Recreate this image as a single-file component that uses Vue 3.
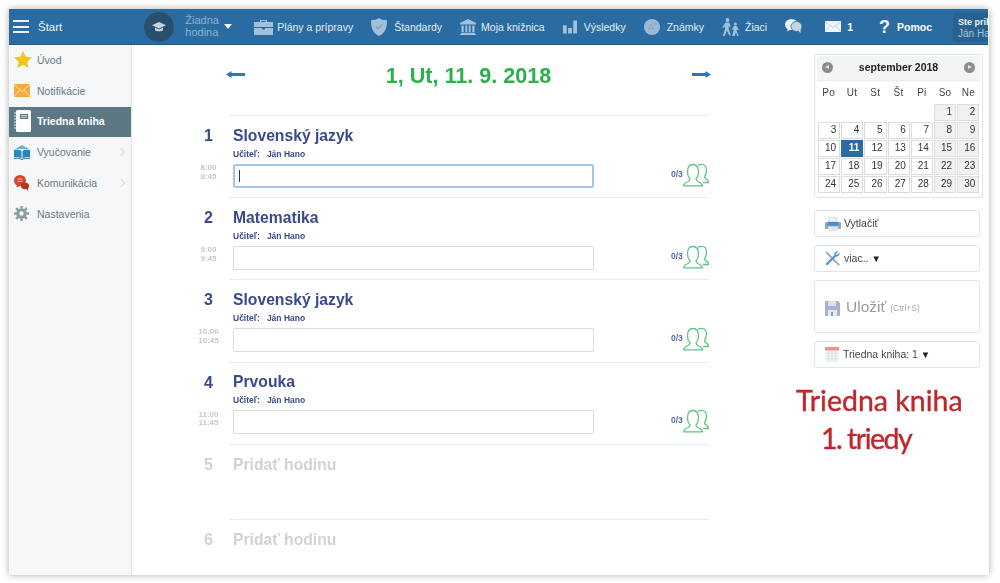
<script setup>
const weekdays = ['Po', 'Ut', 'St', 'Št', 'Pi', 'So', 'Ne']
const blanks = [1, 2, 3, 4, 5]
const days = Array.from({ length: 30 }, (_, i) => i + 1)
const lessons = [
  { n: 1, name: 'Slovenský jazyk', from: '8:00', to: '8:45', focus: true },
  { n: 2, name: 'Matematika', from: '9:00', to: '9:45' },
  { n: 3, name: 'Slovenský jazyk', from: '10:00', to: '10:45' },
  { n: 4, name: 'Prvouka', from: '11:00', to: '11:45' },
]
</script>

<template>
  <div class="page">
    <div class="frame">
      <header class="top">
        <div class="burger"><i></i><i></i><i></i></div>
        <span class="start">Štart</span>
        <div class="cap">
          <svg width="14" height="12" viewBox="0 0 14 12"><path d="M7 1 14 4.200 7 7.400 0 4.200z" fill="#c5d4e0"/><path d="M3 6.600v2.600c1.200 1.300 6.800 1.300 8 0V6.600L7 8.500z" fill="#c5d4e0"/></svg>
        </div>
        <div class="lesson-pick">Žiadna<br>hodina</div>
        <span class="caret"></span>
        <nav class="nav">
          <a class="item g4">
            <svg width="19" height="16" viewBox="0 0 19 16"><path d="M6 3V1h7v2h5.500a.5.500 0 0 1 .5.500V8H0V3.500A.5.500 0 0 1 .5 3zm1.300 0h4.400V2H7.300z" fill="#a4c0d8"/><path d="M0 9h8v1.500h3V9h8v6.500a.5.500 0 0 1-.5.500H.5a.5.500 0 0 1-.5-.5z" fill="#a4c0d8"/></svg>
            Plány a prípravy
          </a>
          <a class="item g7">
            <svg width="16" height="18" viewBox="0 0 16 18"><path d="M8 0c2 1.500 5 2.200 8 2.200 0 7-1.500 12.500-8 15.800C1.500 14.700 0 9.200 0 2.200 3 2.200 6 1.500 8 0z" fill="#a4c0d8"/><path d="m4.800 8.500 2.300 2.400 4.200-4.600" fill="none" stroke="#7ea4c4" stroke-width="1.200"/></svg>
            Štandardy
          </a>
          <a class="item">
            <svg width="16" height="16" viewBox="0 0 16 16"><path d="M8 0 16 4v1.500H0V4z" fill="#a4c0d8"/><path d="M1.500 6.500h2.200v6.500H1.500zM5.300 6.500h2v6.500h-2zM8.700 6.500h2v6.500h-2zM12.300 6.500h2.200v6.500h-2.200zM1 13.800h14V15H1zM0 15h16v1H0z" fill="#a4c0d8"/></svg>
            Moja knižnica
          </a>
          <a class="item g7">
            <svg width="14" height="14" viewBox="0 0 15 14"><path d="M0 5h4v9H0zM5.500 8h4v6h-4zM11 0h4v14h-4z" fill="#a4c0d8"/></svg>
            Výsledky
          </a>
          <a class="item g7">
            <svg width="16" height="16" viewBox="0 0 16 16"><circle cx="8" cy="8" r="8" fill="#9bb9d3"/><path d="m4.500 11.500 2-6h1l2 6M5.300 9.500h3.400M10.500 5h2.500M11.700 3.800v2.400" fill="none" stroke="#7ea4c4" stroke-width=".9"/></svg>
            Známky
          </a>
          <a class="item g6">
            <svg width="17" height="18" viewBox="0 0 17 18"><circle cx="5.500" cy="2" r="1.900" fill="#a4c0d8"/><circle cx="13.300" cy="6" r="1.500" fill="#a4c0d8"/><path d="M3.500 4.500h3.800l1.400 4.200-1.400.6-.6-1.600v3.300l2.300 6.500H7.300L5 12.700 2.500 18H.8l2.200-7V8.200L1.500 10 .3 9.200z" fill="#a4c0d8"/><path d="M11.900 8h2.700l2.200 3.700-1 .6-1-1.300v2.500l1.900 4.500h-1.400l-1.400-3.500-1.400 3.500H10l1.500-5v-2.200l-1 1.100-.8-.7z" fill="#a4c0d8"/></svg>
            Žiaci
          </a>
          <a class="item">
            <svg width="17" height="15" viewBox="0 0 17 15"><ellipse cx="6.500" cy="5.500" rx="6.500" ry="5.500" fill="#eaf1f7"/><path d="m3 9-1 3.500L6.500 10z" fill="#eaf1f7"/><ellipse cx="11.500" cy="7.500" rx="5.500" ry="5" fill="#c2d6e6" stroke="#2a6ca2" stroke-width=".8"/><path d="m13 11 2.500 3.500.2-4.500z" fill="#c2d6e6"/></svg>
          </a>
          <a class="item mail">
            <svg width="16" height="11" viewBox="0 0 16 11"><path d="M0 0h16v11H0z" fill="#eef4f9"/><path d="m0 .5 8 6 8-6M0 10.500l5.500-6M16 10.500l-5.500-6" fill="none" stroke="#b9cfe1" stroke-width=".8"/></svg>
            <b>1</b>
          </a>
          <a class="item help"><span class="q">?</span><b>Pomoc</b></a>
          <div class="user"><b>Ste prihlásený</b><span>Ján Hano</span></div>
        </nav>
      </header>

      <div class="body">
        <aside class="side">
          <a class="s-item">
            <svg width="18" height="17" viewBox="0 0 18 17"><path d="m9 0 2.700 5.800 6.300.7-4.700 4.300 1.300 6.200L9 13.800 3.400 17l1.300-6.200L0 6.500l6.300-.7z" fill="#f5c516"/></svg>
            Úvod
          </a>
          <a class="s-item">
            <svg width="16" height="13" viewBox="0 0 16 13"><path d="M0 0h16v13H0z" fill="#f6aa3c"/><path d="m0 .5 8 7 8-7M0 12.500l6-6.500M16 12.500 10 6" fill="none" stroke="#fde6c4" stroke-width=".9"/></svg>
            Notifikácie
          </a>
          <a class="s-item active">
            <svg width="17" height="22" viewBox="0 0 17 22"><rect x="2" y="0" width="15" height="22" rx="1.500" fill="#fff"/><rect x="6" y="4" width="8" height="5" fill="#5c7884"/><path d="M7 5.500h6M7 7.300h6" stroke="#fff" stroke-width=".7"/><path d="M0 3h3M0 6h3M0 9h3M0 12h3M0 15h3M0 18h3" stroke="#e8eef0" stroke-width="1"/></svg>
            Triedna kniha
          </a>
          <a class="s-item">
            <svg width="16" height="15" viewBox="0 0 16 15"><path d="M8 0 15 4H1z" fill="#6fb2d8"/><path d="M0 5c3-.6 6-.3 7.500 1v7.500C6 12.500 3 12 0 12.500z" fill="#2b86bd"/><path d="M16 5c-3-.6-6-.3-7.500 1v7.500c1.500-1 4.500-1.500 7.500-1z" fill="#2b86bd"/><path d="M0 13.500c3-.5 6 0 8 1 2-1 5-1.500 8-1" fill="none" stroke="#1c6c9d" stroke-width=".9"/></svg>
            Vyučovanie
            <span class="chev"></span>
          </a>
          <a class="s-item">
            <svg width="15" height="16" viewBox="0 0 15 16"><ellipse cx="6" cy="5.500" rx="6" ry="5.500" fill="#d8412c"/><path d="M3 9 2.500 12.500 7 10.500z" fill="#d8412c"/><ellipse cx="11" cy="11" rx="4" ry="3.300" fill="#b83423"/><path d="m12 13.500 2 2.500v-3.500z" fill="#b83423"/><path d="M3.500 4h5M3.500 6.300h5" stroke="#f4c9c1" stroke-width="1"/></svg>
            Komunikácia
            <span class="chev"></span>
          </a>
          <a class="s-item">
            <svg width="15" height="15" viewBox="0 0 15 15"><circle cx="7.500" cy="7.500" r="5.300" fill="#8c9ba2"/><path d="M7.500 0v15M0 7.500h15M2.200 2.200l10.600 10.600M12.800 2.200 2.200 12.800" stroke="#8c9ba2" stroke-width="2.400" stroke-dasharray="2.600 9.800"/><circle cx="7.500" cy="7.500" r="2.200" fill="#f5f7f9"/></svg>
            Nastavenia
          </a>
        </aside>

        <main class="main">
          <section class="center">
            <div class="date-row">
              <svg class="arr" width="19" height="7" viewBox="0 0 19 7"><path d="M0 3.500 5.500 0v2H19v3H5.500v2z" fill="#2f78b4"/></svg>
              <h1>1, Ut, 11. 9. 2018</h1>
              <svg class="arr" width="19" height="7" viewBox="0 0 19 7"><path d="M19 3.500 13.500 0v2H0v3h13.500v2z" fill="#2f78b4"/></svg>
            </div>

            <div v-for="l in lessons" :key="l.n" class="row">
              <div class="left">
                <b class="num">{{ l.n }}</b>
                <span class="time">{{ l.from }}<br>{{ l.to }}</span>
              </div>
              <div class="cell">
                <h2>{{ l.name }}</h2>
                <div class="teacher">Učiteľ:<span>Ján Hano</span></div>
                <div class="entry">
                  <div class="box" :class="{ focus: l.focus }"><i v-if="l.focus" class="cursor"></i></div>
                  <span class="count">0/3</span>
                  <svg class="people" width="26" height="24" viewBox="0 0 26 24">
                    <path d="M15 2.300C16 1.500 17.500 1.300 18.500 1.300c3.500 0 5 2.500 5 6 0 3-1 5-2 6.500 0 1 .5 1.500 1.500 2 1.500.7 2.500 1.500 2.500 3.700h-5.500" fill="none" stroke="#5cc585" stroke-width="1.300"/>
                    <path d="M.8 22.800c0-2 1.700-3.300 4.200-4.300 1.500-.7 2-1.500 2-2.500-1.500-1.500-2.500-4-2.500-7C4.500 4 6 1.500 10 1.500S15.500 4 15.500 9c0 3-1 5.500-2.500 7 0 1 .5 1.800 2 2.500 2.500 1 4 2.300 4.500 4.300z" fill="#fff" stroke="#5cc585" stroke-width="1.300"/>
                  </svg>
                </div>
              </div>
            </div>

            <div class="row empty">
              <div class="left"><b class="num">5</b></div>
              <div class="cell"><h2>Pridať hodinu</h2></div>
            </div>
            <div class="row empty">
              <div class="left"><b class="num">6</b></div>
              <div class="cell"><h2>Pridať hodinu</h2></div>
            </div>
          </section>

          <section class="right">
            <div class="cal">
              <div class="cal-head">
                <span class="round prev"></span>
                <b>september 2018</b>
                <span class="round next"></span>
              </div>
              <div class="weekdays"><span v-for="w in weekdays" :key="w">{{ w }}</span></div>
              <div class="grid">
                <span v-for="b in blanks" :key="'b' + b" class="blank"></span>
                <span
                  v-for="d in days"
                  :key="d"
                  class="day"
                  :class="{ we: d % 7 === 1 || d % 7 === 2, today: d === 11 }"
                >{{ d }}</span>
              </div>
            </div>

            <div class="btn">
              <svg width="16" height="14" viewBox="0 0 16 14"><path d="M4.500 0h6.500l1 5H3.500z" fill="#eef4f9" stroke="#b3c1cb" stroke-width=".6"/><path d="M1 5h14a1 1 0 0 1 1 1v5a1 1 0 0 1-1 1H1a1 1 0 0 1-1-1V6a1 1 0 0 1 1-1z" fill="#9aa8b3"/><path d="M3 5h10l1 3.500H2z" fill="#3e90d8"/><path d="M3 9.500h10V14H3z" fill="#e4e8ec"/></svg>
              <span>Vytlačiť</span>
            </div>
            <div class="btn">
              <svg width="15" height="15" viewBox="0 0 15 15"><path d="m1.500 1.500 12 12" stroke="#a7b3bb" stroke-width="2.200" stroke-linecap="round"/><path d="m2 13 8.500-8.500" stroke="#4f97cf" stroke-width="2.400" stroke-linecap="round"/><path d="M14.500 1.500 12 4l-1.500-1L13 .5c-2-.8-4 .8-3.500 3L11 5.500c2 .6 4-1.500 3.500-4z" fill="#4f97cf"/></svg>
              <span>viac.. <small class="tri">▼</small></span>
            </div>
            <div class="btn save">
              <svg width="15" height="15" viewBox="0 0 15 15"><path d="M0 0h13l2 2v13H0z" fill="#a9b0d0"/><path d="M3 0h8v5H3z" fill="#dfe2ee"/><path d="M3 9h9v6H3z" fill="#e6e8f0"/><path d="M6 11h2v4H6z" fill="#8f97bd"/></svg>
              <span class="save-t">Uložiť</span><small>(Ctrl+S)</small>
            </div>
            <div class="btn">
              <svg width="14" height="15" viewBox="0 0 14 15"><path d="M0 0h14v15H0z" fill="#f3f5f7"/><path d="M0 0h14v3.500H0z" fill="#ef8f8f"/><path d="M1 6h12M1 9h12M1 12h12M3.500 4v10M7 4v10M10.500 4v10" stroke="#d4dae0" stroke-width=".6"/></svg>
              <span>Triedna kniha: 1 <small class="tri">▼</small></span>
            </div>
          </section>
        </main>
      </div>

      <div class="note">
        <span>Triedna kniha</span>
        <span class="note2">1. triedy</span>
      </div>
    </div>
  </div>
</template>

<style>
html, body { margin: 0; background: #fff; }
</style>

<style scoped>
.page {
  width: 1000px;
  height: 583px;
  padding: 9px 0 0 9px;
  box-sizing: border-box;
  overflow: hidden;
  font-family: "Liberation Sans", Arial, sans-serif;
  background: #fff;
}
.frame {
  position: relative;
  width: 980px;
  height: 565.500px;
  display: flex;
  flex-direction: column;
  background: #fff;
  box-shadow: 0 0 7px rgba(0, 0, 0, .32);
  filter: blur(.35px);
}

/* top bar */
.top {
  height: 36px;
  flex: none;
  margin-right: 1px;
  display: flex;
  align-items: center;
  background: #2a6ca2;
  border-bottom: 1px solid #235b88;
  box-sizing: border-box;
  color: #e3ecf4;
  font-size: 10.500px;
  padding-left: 4px;
  overflow: hidden;
}
.burger { width: 16px; flex: none; display: flex; flex-direction: column; gap: 3.500px; }
.burger i { height: 2px; background: #eef4f9; display: block; }
.start { margin-left: 9px; font-size: 11.500px; color: #eef4f9; }
.cap {
  margin-left: 82px;
  width: 30px;
  height: 30px;
  flex: none;
  border-radius: 50%;
  background: #27506f;
  display: flex;
  align-items: center;
  justify-content: center;
}
.lesson-pick { margin-left: 11px; width: 32px; font-size: 11px; line-height: 11.500px; color: #8fb1cd; }
.caret {
  margin-left: 7px;
  border-left: 4.500px solid transparent;
  border-right: 4.500px solid transparent;
  border-top: 5px solid #eef4f9;
}
.nav { margin-left: 22px; display: flex; align-items: center; gap: 18px; flex: 1; min-width: 0; }
.item { display: flex; align-items: center; gap: 5px; white-space: nowrap; flex: none; }
.item svg { flex: none; }
.g4 { gap: 4px; }
.g6 { gap: 6px; }
.g7 { gap: 7px; }
.item b { color: #fff; font-size: 10.500px; }
.mail { margin-left: 5px; gap: 6px; }
.help { margin-left: 8px; gap: 8px; }
.q { font-size: 18px; font-weight: bold; color: #f4f8fb; width: 10px; line-height: 18px; }
.user {
  margin-left: 3px;
  flex: 1;
  height: 30px;
  min-width: 0;
  overflow: hidden;
  white-space: nowrap;
  background: #2a628f;
  border-radius: 2px 0 0 2px;
  padding: 5px 0 0 5px;
  box-sizing: border-box;
  display: flex;
  flex-direction: column;
  line-height: 12px;
}
.user b { font-size: 9px; color: #eef4f9; line-height: 11px; }
.user span { font-size: 10px; color: #a9c5dc; }

/* body */
.body { flex: 1; display: flex; min-height: 0; }
.side {
  width: 123px;
  flex: none;
  box-sizing: border-box;
  background: #f5f7f9;
  border-right: 1px solid #e1e5e8;
}
.s-item {
  position: relative;
  height: 30.800px;
  box-sizing: border-box;
  padding: 0 0 1px 28px;
  display: flex;
  align-items: center;
  color: #6b7a83;
  font-size: 10.500px;
}
.s-item svg { position: absolute; left: 5px; }
.s-item.active { background: #5c7884; color: #fff; font-weight: bold; }
.chev {
  position: absolute;
  right: 7px;
  width: 5px;
  height: 5px;
  border-top: 1px solid #d9dee2;
  border-right: 1px solid #d9dee2;
  transform: rotate(45deg);
}

.main { flex: 1; display: flex; min-width: 0; }
.center { margin-left: 58px; width: 519px; flex: none; }
.date-row {
  height: 70px;
  padding-left: 36px;
  display: flex;
  align-items: flex-start;
  justify-content: space-between;
  width: 485px;
}
.date-row h1 {
  margin: 18px 0 0;
  font-size: 21.600px;
  line-height: 25px;
  color: #2cb04c;
  font-weight: bold;
}
.arr { margin-top: 26px; }
.row { display: grid; grid-template-columns: 39px 480px; height: 82.200px; }
.left { position: relative; }
.num {
  position: absolute;
  left: 0;
  width: 37px;
  top: 12px;
  text-align: center;
  font-size: 16px;
  line-height: 18px;
  color: #3a4a8c;
}
.time {
  position: absolute;
  left: 0;
  width: 37px;
  top: 49px;
  text-align: center;
  font-size: 8px;
  line-height: 8.500px;
  font-weight: bold;
  color: #c8c8c8;
}
.cell { border-top: 1px solid #e3ebf4; padding-left: 4px; }
h2 {
  margin: 9.800px 0 0;
  font-size: 15.700px;
  line-height: 20px;
  color: #3a4a8c;
}
.teacher {
  font-size: 8.500px;
  font-weight: bold;
  color: #3a4a8c;
  margin-top: 2px;
  line-height: 12px;
}
.teacher span { margin-left: 7px; }
.entry { display: flex; align-items: center; margin-top: 4px; height: 24px; }
.box {
  width: 361px;
  height: 24px;
  box-sizing: border-box;
  border: 1px solid #dcdcdc;
  border-radius: 1px;
  position: relative;
  flex: none;
  background: #fff;
}
.box.focus { border: 2px solid #a4c4f0; border-radius: 2px; }
.cursor {
  position: absolute;
  left: 4px;
  top: 4px;
  width: 1.300px;
  height: 12px;
  background: #2b3a74;
}
.count { margin-left: 77px; width: 12px; margin-top: -4px; font-size: 8.500px; font-weight: bold; color: #5a69a8; }
.people { flex: none; margin-top: -2px; }
.empty { height: 75.200px; }
.empty .num, .empty h2 { color: #d2d2d2; }
.empty h2 { margin-top: 10.200px; }

/* right */
.right { margin-left: 105px; width: 169px; flex: none; padding-top: 9px; }
.cal {
  height: 144px;
  box-sizing: border-box;
  border: 1px solid #dbe6f0;
  border-radius: 2px;
  padding: 1px 2px;
}
.cal-head {
  height: 25px;
  box-sizing: border-box;
  background: #f2f4f6;
  border-bottom: 1px solid #e3ebf3;
  display: flex;
  align-items: center;
  justify-content: space-between;
  padding: 0 5px 2px;
  font-size: 10.500px;
  color: #222;
}
.round { width: 11px; height: 11px; border-radius: 50%; background: #8d8d8d; position: relative; }
.round::after {
  content: "";
  position: absolute;
  top: 3px;
  border-top: 2.500px solid transparent;
  border-bottom: 2.500px solid transparent;
}
.prev::after { left: 3px; border-right: 4px solid #e6e6e6; }
.next::after { left: 4px; border-left: 4px solid #e6e6e6; }
.weekdays {
  display: grid;
  grid-template-columns: repeat(7, 1fr);
  height: 23px;
  align-items: center;
  text-align: center;
  font-size: 10px;
  color: #444;
  letter-spacing: .2px;
  width: 163px;
}
.grid {
  display: grid;
  grid-template-columns: repeat(7, 22.200px);
  grid-auto-rows: 17px;
  gap: 1px;
  margin-left: 1px;
}
.day {
  box-sizing: border-box;
  border: 1px solid #dcdcdc;
  background: #fff;
  text-align: right;
  padding-right: 3px;
  font-size: 10px;
  line-height: 14px;
  color: #333;
}
.day.we { background: #eff1f2; border-color: #dcdfe1; }
.day.today { background: #2a6ca2; border-color: #2a6ca2; color: #fff; font-weight: bold; }

.btn {
  width: 166px;
  height: 27px;
  box-sizing: border-box;
  margin-top: 8px;
  border: 1px solid #dde6ef;
  border-radius: 3px;
  display: flex;
  align-items: center;
  padding: 0 0 2px 10px;
  gap: 4px;
  font-size: 10.500px;
  color: #444;
}
.btn svg { flex: none; margin-top: 2px; }
.btn:nth-of-type(2) { gap: 3px; }
.cal + .btn { margin-top: 12px; }
.tri { font-size: 9.500px; color: #222; }
.save { height: 53px; color: #999; gap: 6px; padding-bottom: 0; }
.save svg { margin-top: 4px; }
.save-t { font-size: 15.500px; }
.save small { font-size: 8.500px; margin-left: -2px; margin-top: 3px; color: #aaa; }

/* handwritten note over the page */
.note {
  position: absolute;
  left: 787px;
  top: 372px;
  display: flex;
  flex-direction: column;
  font-family: "Lato", sans-serif;
  font-size: 28.500px;
  line-height: 38px;
  color: #c0272d;
  -webkit-text-stroke: .4px #c0272d;
  white-space: nowrap;
}
.note2 { margin-left: 25px; letter-spacing: -1.500px; }
</style>
